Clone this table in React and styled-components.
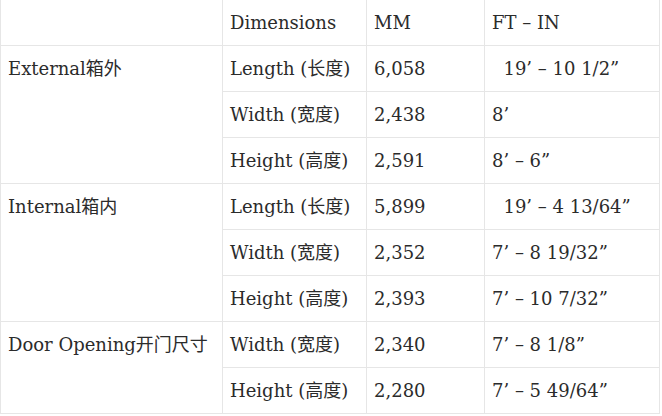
import React from "react";
import styled, { createGlobalStyle } from "styled-components";

const GlobalStyle = createGlobalStyle`
  html, body {
    margin: 0;
    padding: 0;
    background: #ffffff;
  }
`;

const rows = [
  {
    group: "External箱外",
    items: [
      ["Length (长度)", "6,058", "\u00a0\u00a019’ – 10 1/2”"],
      ["Width (宽度)", "2,438", "8’"],
      ["Height (高度)", "2,591", "8’ – 6”"],
    ],
  },
  {
    group: "Internal箱内",
    items: [
      ["Length (长度)", "5,899", "\u00a0\u00a019’ – 4 13/64”"],
      ["Width (宽度)", "2,352", "7’ – 8 19/32”"],
      ["Height (高度)", "2,393", "7’ – 10 7/32”"],
    ],
  },
  {
    group: "Door Opening开门尺寸",
    items: [
      ["Width (宽度)", "2,340", "7’ – 8 1/8”"],
      ["Height (高度)", "2,280", "7’ – 5 49/64”"],
    ],
  },
];

export default function App() {
  return (
    <>
      <GlobalStyle />
      <Table>
        <colgroup>
          <col style={{ width: 222 }} />
          <col style={{ width: 144 }} />
          <col style={{ width: 118 }} />
          <col style={{ width: 175 }} />
        </colgroup>
        <tbody>
          <tr>
            <Cell></Cell>
            <Cell>Dimensions</Cell>
            <Cell>MM</Cell>
            <Cell>FT – IN</Cell>
          </tr>
          {rows.map(({ group, items }) =>
            items.map(([label, mm, ft], i) => (
              <tr key={group + label}>
                {i === 0 && (
                  <Cell rowSpan={items.length} $top>
                    {group}
                  </Cell>
                )}
                <Cell>{label}</Cell>
                <Cell>{mm}</Cell>
                <Cell>{ft}</Cell>
              </tr>
            ))
          )}
        </tbody>
      </Table>
    </>
  );
}

const Table = styled.table`
  width: 660px;
  margin-top: -1px;
  border-collapse: collapse;
  table-layout: fixed;
  font-family: "DejaVu Serif", "Noto Sans CJK SC", serif;
  font-size: 18px;
  color: #2b2b2b;
`;

const Cell = styled.td`
  border: 1px solid #e6e6e6;
  padding: 8px 7px;
  height: 29px;
  line-height: 29px;
  vertical-align: ${(p) => (p.$top ? "top" : "middle")};
  white-space: nowrap;
  overflow: hidden;
  text-align: left;
`;
